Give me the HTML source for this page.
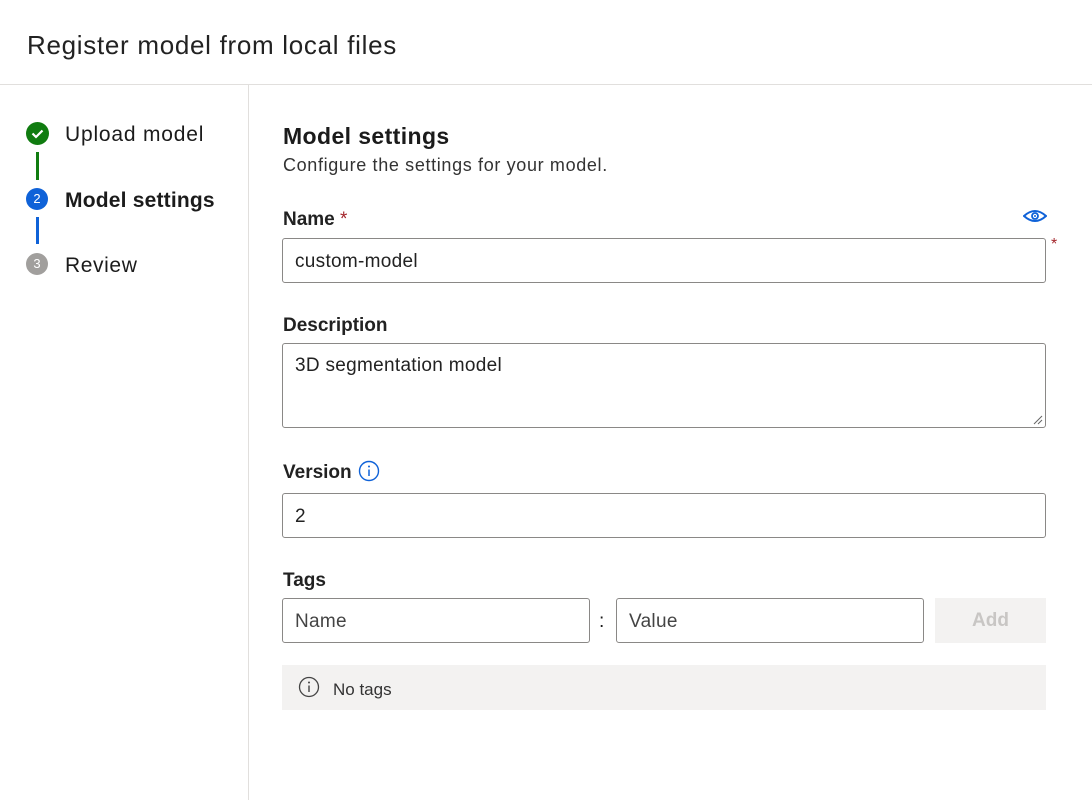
<!DOCTYPE html>
<html><head><style>
body{margin:0;width:1092px;height:800px;background:#fff;font-family:"Liberation Sans",sans-serif;color:#1b1b1b;position:relative;overflow:hidden}
.a{position:absolute}
.inp{position:absolute;border:1px solid #8a8886;border-radius:3px;box-sizing:border-box;font-size:19px;padding-left:12px;color:#222;letter-spacing:0.3px}
.lbl{position:absolute;font-size:19px;font-weight:bold;color:#222}
</style></head><body>
<div class="a" style="left:27px;top:30px;font-size:26px;color:#222;letter-spacing:0.7px">Register model from local files</div>
<div class="a" style="left:0;top:84px;width:1092px;height:1px;background:#e1dfdd"></div>
<div class="a" style="left:248px;top:85px;width:1px;height:715px;background:#e1dfdd"></div>

<div class="a" style="left:26px;top:122px;width:23px;height:23px;border-radius:50%;background:#107c10"></div>
<svg class="a" style="left:26px;top:122px" width="23" height="23"><path d="M6.5 11.5l3.5 3.5 6.5-6.5" stroke="#fff" stroke-width="2.2" fill="none"/></svg>
<div class="a" style="left:36px;top:152px;width:3px;height:28px;background:#107c10"></div>
<div class="a" style="left:26px;top:188px;width:22px;height:22px;border-radius:50%;background:#0f62d8;color:#fff;font-size:13px;text-align:center;line-height:22px">2</div>
<div class="a" style="left:36px;top:217px;width:3px;height:27px;background:#0f62d8"></div>
<div class="a" style="left:26px;top:253px;width:22px;height:22px;border-radius:50%;background:#a19f9d;color:#fff;font-size:13px;text-align:center;line-height:22px">3</div>
<div class="a" style="left:65px;top:123px;font-size:21px;letter-spacing:0.8px">Upload model</div>
<div class="a" style="left:65px;top:189px;font-size:21px;font-weight:bold;letter-spacing:0.2px">Model settings</div>
<div class="a" style="left:65px;top:254px;font-size:21px;letter-spacing:0.6px">Review</div>

<div class="a" style="left:283px;top:123px;font-size:23px;font-weight:bold;letter-spacing:0.4px">Model settings</div>
<div class="a" style="left:283px;top:155px;font-size:18px;color:#333;letter-spacing:0.65px">Configure the settings for your model.</div>

<div class="lbl" style="left:283px;top:209px">Name <span style="color:#a4262c;font-weight:normal">*</span></div>
<svg class="a" style="left:1023px;top:209px" width="24" height="14"><path d="M1 7Q12 -3 23 7Q12 17 1 7Z" stroke="#0f62d8" stroke-width="2" fill="none"/><circle cx="12" cy="7" r="3" stroke="#0f62d8" stroke-width="1.8" fill="none"/><circle cx="12" cy="7" r="1" fill="#0f62d8"/></svg>
<div class="inp" style="left:282px;top:238px;width:764px;height:45px;line-height:46px">custom-model</div>
<div class="a" style="left:1051px;top:236px;color:#a4262c;font-size:16px">*</div>

<div class="lbl" style="left:283px;top:315px">Description</div>
<div class="inp" style="left:282px;top:343px;width:764px;height:85px;padding-top:11px">3D segmentation model</div>
<svg class="a" style="left:1033px;top:415px" width="10" height="10"><path d="M1 9L9 1M5 9L9 5" stroke="#666" stroke-width="1"/></svg>

<div class="lbl" style="left:283px;top:462px">Version</div>
<svg class="a" style="left:358px;top:460px" width="22" height="22"><circle cx="11" cy="11" r="9.5" stroke="#0f62d8" stroke-width="1.4" fill="none"/><path d="M11 9.5v6.5" stroke="#0f62d8" stroke-width="1.5"/><circle cx="11" cy="6.5" r="1" fill="#0f62d8"/></svg>
<div class="inp" style="left:282px;top:493px;width:764px;height:45px;line-height:46px">2</div>

<div class="lbl" style="left:283px;top:570px">Tags</div>
<div class="inp" style="left:282px;top:598px;width:308px;height:45px;line-height:46px;color:#444">Name</div>
<div class="a" style="left:599px;top:611px;font-size:19px">:</div>
<div class="inp" style="left:616px;top:598px;width:308px;height:45px;line-height:46px;color:#444">Value</div>
<div class="a" style="left:935px;top:598px;width:111px;height:45px;background:#f3f2f1;color:#c8c6c4;font-size:19px;font-weight:bold;text-align:center;line-height:46px">Add</div>

<div class="a" style="left:282px;top:665px;width:764px;height:45px;background:#f3f2f1"></div>
<svg class="a" style="left:298px;top:676px" width="22" height="22"><circle cx="11" cy="11" r="9.5" stroke="#444" stroke-width="1.3" fill="none"/><path d="M11 9.5v6.5" stroke="#444" stroke-width="1.4"/><circle cx="11" cy="6.5" r="1" fill="#444"/></svg>
<div class="a" style="left:333px;top:680px;font-size:17px;color:#333">No tags</div>
</body></html>
